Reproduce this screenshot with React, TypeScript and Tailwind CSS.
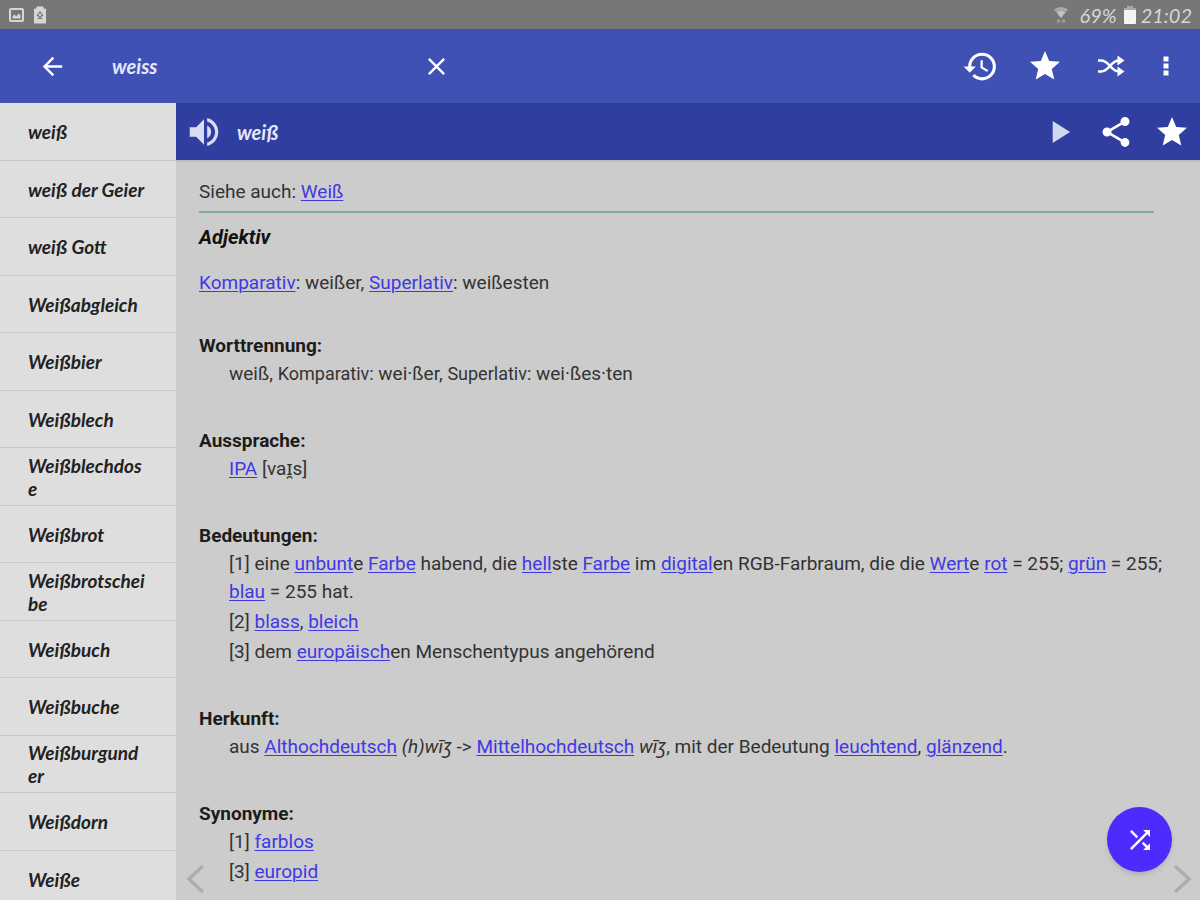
import type { ReactNode } from 'react';
import {
  MdArrowBack,
  MdClose,
  MdHistory,
  MdPlayArrow,
  MdShare,
  MdShuffle,
  MdStar,
  MdVolumeUp,
} from 'react-icons/md';

const words = [
  'weiß',
  'weiß der Geier',
  'weiß Gott',
  'Weißabgleich',
  'Weißbier',
  'Weißblech',
  'Weißblechdose',
  'Weißbrot',
  'Weißbrotscheibe',
  'Weißbuch',
  'Weißbuche',
  'Weißburgunder',
  'Weißdorn',
  'Weiße',
];

const script = "font-['Lato','Noto_Sans',sans-serif] italic";

function StatusBar() {
  return (
    <div className="flex h-[29px] shrink-0 items-center bg-[#777777] px-2 text-[#d6d6d6]">
      <svg className="h-4 w-4" viewBox="0 0 16 16" aria-hidden="true">
        <rect x="2" y="2" width="13" height="12" rx="1" fill="none" stroke="currentColor" strokeWidth="2" />
        <path d="M4.500 11.500v-2l2-2 2 2 2-3 2 2v3z" fill="currentColor" />
      </svg>
      <svg className="ml-2 h-[18px] w-4" viewBox="0 0 16 18" aria-hidden="true">
        <path d="M5 1h6v2h2.500v14h-11V3H5z" fill="currentColor" stroke="currentColor" strokeLinejoin="round" />
        <path d="M5 10l3-4 3 4M5.500 12.500h5M6 9.500l2 2 2-2" fill="none" stroke="#777777" strokeWidth="1.200" />
      </svg>
      <div className="ml-auto flex items-center">
        <svg className="mr-2.5 h-[18px] w-4" viewBox="0 0 16 18" fill="currentColor" aria-hidden="true">
          <path d="M1 3.500Q8 -1.500 15 3.500L13 6Q8 2.500 3 6z" opacity=".55" />
          <path d="M3.500 6.200Q8 3 12.500 6.200L8 12z" opacity=".8" />
          <path d="M4 13.500h3v3H4zM9 13.500h3v3H9z" opacity=".4" />
        </svg>
        <span className={`text-xl leading-7 ${script}`}>69%</span>
        <svg className="mr-1 ml-1.5 h-5 w-3.5" viewBox="0 0 14 20" aria-hidden="true">
          <path d="M4 1h6v2h3v3H1V3h3z" fill="#a8a8a8" />
          <rect x="1" y="5" width="12" height="14" rx="1" fill="#f4f4f4" />
        </svg>
        <span className={`text-xl leading-7 ${script}`}>21:02</span>
      </div>
    </div>
  );
}

function AppBar() {
  return (
    <header className="flex h-[74px] shrink-0 items-center bg-[#3f51b5] text-white">
      <button type="button" aria-label="Zurück" className="ml-[38px]">
        <MdArrowBack className="size-[29px]" />
      </button>
      <input
        type="text"
        aria-label="Suche"
        defaultValue="weiss"
        className={`ml-[45px] w-[305px] bg-transparent text-xl font-bold text-[#e4e7f8] outline-none ${script}`}
      />
      <button type="button" aria-label="Löschen" className="ml-[5px]">
        <MdClose className="size-[29px]" />
      </button>
      <div className="ml-auto flex items-center pr-[19px]">
        <button type="button" aria-label="Verlauf">
          <MdHistory className="size-[37px]" />
        </button>
        <button type="button" aria-label="Favoriten" className="ml-7">
          <MdStar className="size-9" />
        </button>
        <button type="button" aria-label="Zufällig" className="ml-8">
          <svg className="h-6 w-8" viewBox="0 0 32 24" fill="none" stroke="currentColor" strokeWidth="2.600" aria-hidden="true">
            <path d="M3 6.500h3c4 0 6 2 9 5.500s5 5.500 9 5.500h2M3 17.500h3c4 0 6-2 9-5.500s5-5.500 9-5.500h2" />
            <path d="M22.500 1.500v10l7-5zM22.500 12.500v10l7-5z" fill="currentColor" stroke="none" />
          </svg>
        </button>
        <button type="button" aria-label="Mehr" className="ml-6">
          <svg className="size-[30px]" viewBox="0 0 30 30" fill="currentColor" aria-hidden="true">
            <path d="M12.500 5.500h5v5h-5zM12.500 12.500h5v5h-5zM12.500 19.500h5v5h-5z" />
          </svg>
        </button>
      </div>
    </header>
  );
}

function WordList() {
  return (
    <nav className="w-[176px] shrink-0 overflow-hidden bg-[#dedede]">
      <ul>
        {words.map((word) => (
          <li key={word} className="border-b border-[#c8c8c8] odd:h-[58px] even:h-[57px]">
            <a
              href="#"
              className={`flex h-full items-center pr-[30px] pl-7 text-[19px] leading-[23px] font-bold text-[#222222] ${script}`}
            >
              <span className="wrap-anywhere">{word}</span>
            </a>
          </li>
        ))}
      </ul>
    </nav>
  );
}

function WordBar() {
  return (
    <div className="flex h-[57px] shrink-0 items-center bg-[#303f9f] pr-2.5 pl-[9px] text-white shadow-sm">
      <button type="button" aria-label="Anhören" className="text-[#d9dcf0]">
        <MdVolumeUp className="size-[38px]" />
      </button>
      <h1 className={`ml-3.5 text-xl font-bold text-[#e4e7f8] ${script}`}>weiß</h1>
      <div className="ml-auto flex items-center">
        <button type="button" aria-label="Abspielen" className="text-[#d3d7ee]">
          <MdPlayArrow className="size-[38px]" />
        </button>
        <button type="button" aria-label="Teilen" className="ml-5">
          <MdShare className="size-9" />
        </button>
        <button type="button" aria-label="Favorit" className="ml-5">
          <MdStar className="size-9" />
        </button>
      </div>
    </div>
  );
}

function A({ children }: { children: ReactNode }) {
  return (
    <a href="#" className="text-[#3f38e6] underline decoration-1 underline-offset-2">
      {children}
    </a>
  );
}

function Section({ title, children }: { title: string; children: ReactNode }) {
  return (
    <section className="mb-[39px]">
      <h3 className="font-bold text-[#1c1c1c]">{title}</h3>
      <div className="flex flex-col gap-0.5 pl-[30px]">{children}</div>
    </section>
  );
}

function Entry() {
  return (
    <article className="pt-[18px] pr-7 pl-[23px] font-['Roboto','Noto_Sans',sans-serif] text-[19px] leading-7 text-[#333333]">
      <p>
        Siehe auch: <A>Weiß</A>
      </p>
      <hr className="mt-[5px] mr-[18px] border-t-2 border-[#7fada3]" />
      <h2 className="mt-2.5 text-xl leading-7 font-bold text-[#111111] italic">Adjektiv</h2>
      <p className="mt-[18px] mb-[35px]">
        <A>Komparativ</A>: weißer, <A>Superlativ</A>: weißesten
      </p>
      <Section title="Worttrennung:">
        <p>
          weiß, <span className="text-lg leading-7">Komparativ:</span> wei·ßer,{' '}
          <span className="text-lg leading-7">Superlativ:</span> wei·ßes·ten
        </p>
      </Section>
      <Section title="Aussprache:">
        <p>
          <A>IPA</A> [vaɪ̯s]
        </p>
      </Section>
      <Section title="Bedeutungen:">
        <p>
          [1] eine <A>unbunt</A>e <A>Farbe</A> habend, die <A>hell</A>ste <A>Farbe</A> im <A>digital</A>en
          RGB-Farbraum, die die <A>Wert</A>e <A>rot</A> = 255; <A>grün</A> = 255; <A>blau</A> = 255 hat.
        </p>
        <p>
          [2] <A>blass</A>, <A>bleich</A>
        </p>
        <p>
          [3] dem <A>europäisch</A>en Menschentypus angehörend
        </p>
      </Section>
      <Section title="Herkunft:">
        <p>
          aus <A>Althochdeutsch</A> <i>(h)wīʒ</i> -&gt; <A>Mittelhochdeutsch</A> <i>wīʒ</i>, mit der Bedeutung{' '}
          <A>leuchtend</A>, <A>glänzend</A>.
        </p>
      </Section>
      <Section title="Synonyme:">
        <p>
          [1] <A>farblos</A>
        </p>
        <p>
          [3] <A>europid</A>
        </p>
      </Section>
    </article>
  );
}

export default function App() {
  return (
    <div className="flex h-screen flex-col overflow-hidden bg-[#cccccc]">
      <StatusBar />
      <AppBar />
      <div className="flex min-h-0 flex-1">
        <WordList />
        <main className="relative flex min-w-0 flex-1 flex-col overflow-hidden">
          <WordBar />
          <Entry />
          <button type="button" aria-label="Vorheriges Wort" className="absolute bottom-1.5 left-2.5 text-[#adadad]">
            <svg className="h-[30px] w-5" viewBox="0 0 20 30" fill="none" stroke="currentColor" strokeWidth="3.500" aria-hidden="true">
              <path d="M17 2L3 15l14 13" />
            </svg>
          </button>
          <button type="button" aria-label="Nächstes Wort" className="absolute right-2 bottom-1.5 text-[#adadad]">
            <svg className="h-[30px] w-5" viewBox="0 0 20 30" fill="none" stroke="currentColor" strokeWidth="3.500" aria-hidden="true">
              <path d="M3 2l14 13L3 28" />
            </svg>
          </button>
          <button
            type="button"
            aria-label="Zufälliges Wort"
            className="absolute right-7 bottom-7 flex size-[65px] items-center justify-center rounded-full bg-[#4d2bff] text-white shadow-md"
          >
            <MdShuffle className="size-[30px]" />
          </button>
        </main>
      </div>
    </div>
  );
}
